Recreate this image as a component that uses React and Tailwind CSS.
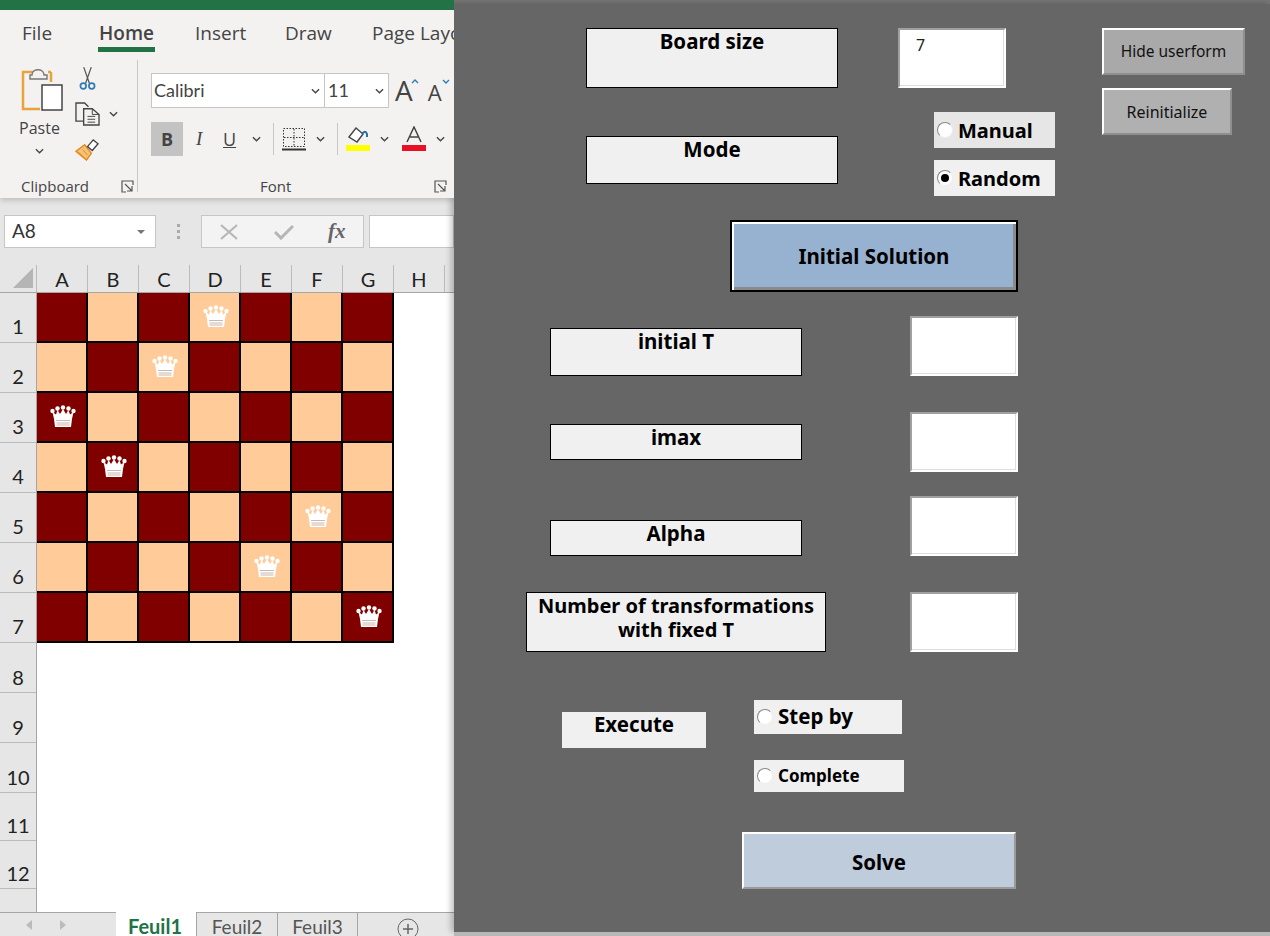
import React from 'react';

const uiFont = 'font-["Open_Sans","Noto_Sans",sans-serif]';
const sheetFont = 'font-["Lato","Liberation_Sans",sans-serif]';
const formFont = 'font-["Noto_Sans","Open_Sans",sans-serif]';

const columns = ['A', 'B', 'C', 'D', 'E', 'F', 'G', 'H', 'I'];
const queens = [3, 2, 0, 1, 5, 4, 6];
// the last two rows on the sheet are a little shorter than the others
const rowHeights = [50, 50, 50, 50, 50, 50, 50, 50, 50, 50, 48, 48];

const Chevron = ({ className = '' }) => (
    <svg viewBox="0 0 10 6" className={`w-[9px] h-[6px] shrink-0 ${className}`} fill="none" stroke="#444" strokeWidth="1.5">
        <path d="M1 1l4 4 4-4" />
    </svg>
);

const PasteIcon = () => (
    <svg viewBox="0 0 42 46" className="w-[42px] h-[46px]" fill="none">
        <path d="M14 6H2v37h17" stroke="#e8a33d" strokeWidth="2.5" />
        <path d="M30 6h-3M30 6v10" stroke="#e8a33d" strokeWidth="2.5" />
        <path d="M11 9c0-7 12-7 12 0h3v4H9V9z" fill="#f3f2f1" stroke="#777" strokeWidth="1.4" />
        <rect x="21" y="19" width="20" height="25" fill="#fff" stroke="#444" strokeWidth="1.5" />
    </svg>
);

const CutIcon = () => (
    <svg viewBox="0 0 18 26" className="w-[17px] h-[25px]" fill="none">
        <path d="M5 1l6 17M13 1L7 18" stroke="#555" strokeWidth="1.3" />
        <circle cx="4.5" cy="21" r="3" stroke="#2b7cb8" strokeWidth="1.8" />
        <circle cx="13.5" cy="21" r="3" stroke="#2b7cb8" strokeWidth="1.8" />
    </svg>
);

const CopyIcon = () => (
    <svg viewBox="0 0 26 25" className="w-[25px] h-[24px]" fill="none" stroke="#444" strokeWidth="1.4">
        <path d="M9 20H1V1h9l4 4" />
        <path d="M9 7h9l7 6v11H9z" fill="#f3f2f1" />
        <path d="M18 7v6h7M13 15h8M13 18h8M13 21h8" strokeWidth="1" />
    </svg>
);

const PainterIcon = () => (
    <svg viewBox="0 0 26 24" className="w-[25px] h-[23px]" fill="none">
        <path d="M1 14l9-7 7 9-5 7z" fill="#f6c27a" stroke="#e08b1f" strokeWidth="1.5" />
        <path d="M4 15l6 6M8 12l5 6" stroke="#e08b1f" />
        <path d="M13 9l6-7 5 4-6 7z" fill="#fff" stroke="#444" strokeWidth="1.4" />
    </svg>
);

const Launcher = () => (
    <svg viewBox="0 0 13 13" className="w-[13px] h-[13px]" fill="none" stroke="#555" strokeWidth="1.2">
        <path d="M12 5V1H1v11h4" />
        <path d="M4 4l7 7M11 6v5H6" />
    </svg>
);

const BorderIcon = () => (
    <svg viewBox="0 0 24 24" className="w-[24px] h-[24px]" fill="none" stroke="#333">
        <rect x="1.5" y="1.5" width="21" height="18" strokeDasharray="1.5 1.5" />
        <path d="M12 2v17M2 10.5h20" strokeDasharray="1.5 1.5" />
        <path d="M0 22.5h24" strokeWidth="2" />
    </svg>
);

const FillIcon = () => (
    <svg viewBox="0 0 24 26" className="w-[24px] h-[26px]" fill="none">
        <path d="M3 11L10 2l7 6-6 8z" fill="#fff" stroke="#444" strokeWidth="1.4" />
        <path d="M16 8c2-3 4-3 5 0v3" stroke="#2b6ca8" strokeWidth="2" />
        <rect y="19" width="24" height="6" fill="#ffff00" />
    </svg>
);

const FontColorIcon = () => (
    <svg viewBox="0 0 24 26" className="w-[24px] h-[26px]" fill="none">
        <path d="M5 16L12 1l7 15M8 11h8" stroke="#444" strokeWidth="1.5" />
        <rect y="19" width="24" height="6" fill="#e81123" />
    </svg>
);

const FontSizeCaret = ({ down = false, className = '' }) => (
    <svg viewBox="0 0 8 5" className={`w-[8px] h-[5px] shrink-0 ${className}`} fill="none" stroke="#2b7cb8" strokeWidth="1.4">
        <path d={down ? 'M1 1l3 3 3-3' : 'M1 4l3-3 3 3'} />
    </svg>
);

// white crown with the faint bands that the chess glyph has on the sheet
const Queen = () => (
    <svg viewBox="0 0 26 23" className="w-[26px] h-[23px]">
        <g fill="#fff">
            <circle cx="2.5" cy="6" r="2.2" />
            <circle cx="7.5" cy="3.5" r="2.2" />
            <circle cx="13" cy="2.5" r="2.2" />
            <circle cx="18.5" cy="3.5" r="2.2" />
            <circle cx="23.5" cy="6" r="2.2" />
            <path d="M2.5 7l3.500 2.500L7.500 5l2.500 4L13 4l3 5 2.500-4 1.500 4.500L23.500 7 22 14l-1 8H5l-1-8z" />
        </g>
        <path d="M6 15.500h14M6.500 18h13M6.500 20h13" stroke="#b39a90" strokeWidth="0.7" fill="none" />
    </svg>
);

const Ribbon = () => (
    <div className={`h-[198px] bg-[#f3f2f1] flex flex-col text-[#444] shadow-[0_2px_6px_rgba(0,0,0,0.2)] relative ${uiFont}`}>
        <div className="h-[10px] bg-[#217346]" />
        <div className="h-[44px] flex text-[19px] leading-[47px] whitespace-nowrap">
            <span className="ml-[22px] w-[30px] shrink-0">File</span>
            <span className="ml-[46px] w-[57px] h-[42px] shrink-0 font-semibold text-center border-b-[5px] border-[#217346]">Home</span>
            <span className="ml-[40px] w-[48px] shrink-0">Insert</span>
            <span className="ml-[42px] w-[45px] shrink-0">Draw</span>
            <span className="ml-[42px] shrink-0">Page Layout</span>
        </div>
        <div className="flex flex-1 pt-[6px]">
            <div className="w-[138px] h-[132px] border-r border-[#c8c6c4] flex shrink-0 relative">
                <div className="w-[75px] flex flex-col items-center pl-[9px] pt-[6px]">
                    <PasteIcon />
                    <span className="text-[16px] leading-[20px] mt-[6px] -ml-[5px]">Paste</span>
                    <Chevron className="mt-[10px] -ml-[5px]" />
                </div>
                <div className="flex flex-col items-start pt-[6px]">
                    <div className="ml-[4px] h-[36px]"><CutIcon /></div>
                    <div className="flex items-center h-[24px]"><CopyIcon /><Chevron className="ml-[9px]" /></div>
                    <div className="h-[26px] mt-[12px]"><PainterIcon /></div>
                </div>
                <div className="absolute left-[21px] bottom-[-4px] text-[15px] leading-[20px]">Clipboard</div>
                <div className="absolute left-[121px] bottom-[-1px]"><Launcher /></div>
            </div>
            <div className="flex-1 h-[132px] pl-[13px] relative">
                <div className="flex h-[35px] mt-[13px]">
                    <div className={`w-[174px] bg-white border border-[#c8c6c4] flex items-center justify-between pl-[2px] pr-[4px] text-[18px] ${sheetFont}`}>Calibri<Chevron /></div>
                    <div className={`w-[64px] bg-white border border-l-0 border-[#c8c6c4] flex items-center justify-between pl-[3px] pr-[4px] text-[18px] ${sheetFont}`}>11<Chevron /></div>
                    <span className="ml-[6px] text-[28px] leading-[34px]">A</span>
                    <FontSizeCaret className="mt-[6px] -ml-[2px]" />
                    <span className="ml-[9px] text-[22px] leading-[38px]">A</span>
                    <FontSizeCaret down className="mt-[6px]" />
                </div>
                <div className="flex items-center h-[34px] mt-[14px]">
                    <div className={`w-[32px] h-[34px] bg-[#c3c3c3] flex items-center justify-center font-bold text-[18px] ${uiFont}`}>B</div>
                    <span className="ml-[13px] w-[12px] text-[19px] italic font-['Liberation_Serif',serif]">I</span>
                    <span className="ml-[15px] w-[16px] text-[18px] underline">U</span>
                    <Chevron className="ml-[13px]" />
                    <div className="ml-[12px] w-px h-[32px] bg-[#c8c6c4]" />
                    <div className="ml-[8px]"><BorderIcon /></div>
                    <Chevron className="ml-[10px]" />
                    <div className="ml-[12px] w-px h-[32px] bg-[#c8c6c4]" />
                    <div className="ml-[8px]"><FillIcon /></div>
                    <Chevron className="ml-[10px]" />
                    <div className="ml-[13px]"><FontColorIcon /></div>
                    <Chevron className="ml-[10px]" />
                </div>
                <div className="absolute left-[122px] bottom-[-4px] text-[15px] leading-[20px]">Font</div>
                <div className="absolute left-[296px] bottom-[-1px]"><Launcher /></div>
            </div>
        </div>
    </div>
);

const FormulaBar = () => (
    <div className={`h-[67px] bg-[#e6e6e6] flex pt-[17px] pl-[4px] ${sheetFont}`}>
        <div className="w-[152px] h-[33px] bg-white border border-[#c8c6c4] flex items-center justify-between pl-[7px] pr-[10px] text-[19px] text-[#333]">
            A8
            <span className="border-x-[4px] border-x-transparent border-t-[4px] border-t-[#777]" />
        </div>
        <div className="w-[45px] flex flex-col items-center justify-center gap-[3px] h-[33px]">
            <span className="w-[3px] h-[3px] bg-[#aaa]" />
            <span className="w-[3px] h-[3px] bg-[#aaa]" />
            <span className="w-[3px] h-[3px] bg-[#aaa]" />
        </div>
        <div className="w-[163px] h-[33px] bg-[#f3f3f3] border border-[#c8c6c4] flex items-center pl-[18px]">
            <svg viewBox="0 0 18 16" className="w-[18px] h-[16px]" fill="none" stroke="#b5b5b5" strokeWidth="2"><path d="M1 1l16 14M17 1L1 15" /></svg>
            <svg viewBox="0 0 20 16" className="w-[20px] h-[16px] ml-[36px]" fill="none" stroke="#b5b5b5" strokeWidth="3"><path d="M1 8l6 6L19 2" /></svg>
            <span className="ml-[34px] text-[21px] italic font-bold text-[#666] font-['Liberation_Serif',serif]">fx</span>
        </div>
        <div className="flex-1 ml-[5px] h-[33px] bg-white border border-[#c8c6c4]" />
    </div>
);

const Cell = ({ row, col }) => {
    const dark = (row + col) % 2 === 0;
    return (
        <div className={`border-r-2 border-b-2 border-black flex justify-center pt-[12px] pl-[2px] ${dark ? 'bg-[#800000]' : 'bg-[#ffcc99]'}`}>
            {queens[row] === col && <Queen />}
        </div>
    );
};

const Sheet = () => (
    <div className={`flex-1 flex flex-col bg-white min-h-0 ${sheetFont}`}>
        <div className="h-[28px] flex bg-[#e6e6e6] border-b border-[#a6a6a6] shrink-0">
            <div className="w-[37px] relative border-r border-[#bbb] shrink-0">
                <div className="absolute right-[3px] bottom-[4px] border-l-[20px] border-l-transparent border-b-[20px] border-b-[#b5b5b5]" />
            </div>
            {columns.map((c) => (
                <div key={c} className="w-[51px] shrink-0 border-r border-[#bbb] text-center text-[20px] leading-[29px] text-[#222]">{c}</div>
            ))}
        </div>
        <div className="flex-1 flex min-h-0 overflow-hidden">
            <div className="w-[37px] shrink-0 bg-[#e6e6e6] border-r border-[#a6a6a6] flex flex-col">
                {rowHeights.map((h, i) => (
                    <div key={i} style={{ height: h }} className={`shrink-0 border-b border-[#bbb] flex items-end justify-center text-[20px] leading-[24px] text-[#222] ${i < 7 ? 'pb-[4px]' : 'pb-[3px]'}`}>{i + 1}</div>
                ))}
            </div>
            <div className="grid grid-cols-[repeat(7,51px)] grid-rows-[repeat(7,50px)] h-[350px]">
                {queens.map((_, row) => columns.slice(0, 7).map((c, col) => (
                    <Cell key={c + row} row={row} col={col} />
                )))}
            </div>
        </div>
    </div>
);

const Tabs = () => (
    <div className={`h-[24px] bg-[#e6e6e6] flex text-[19px] leading-[28px] text-[#555] shrink-0 ${sheetFont}`}>
        <div className="w-[116px] border-t border-[#a6a6a6] flex items-center pl-[26px] gap-[28px] shrink-0">
            <span className="border-y-[5px] border-y-transparent border-r-[6px] border-r-[#bbb]" />
            <span className="border-y-[5px] border-y-transparent border-l-[6px] border-l-[#bbb]" />
        </div>
        <div className="w-[81px] bg-white border-r border-[#a6a6a6] text-center text-[20px] pr-[2px] font-bold text-[#217346] shrink-0">Feuil1</div>
        <div className="w-[81px] border-t border-r border-[#a6a6a6] text-center shrink-0">Feuil2</div>
        <div className="w-[80px] border-t border-r border-[#a6a6a6] text-center shrink-0">Feuil3</div>
        <div className="flex-1 border-t border-[#a6a6a6] pl-[39px] pt-[5px]">
            <svg viewBox="0 0 22 22" className="w-[22px] h-[22px]" fill="none" stroke="#666"><circle cx="11" cy="11" r="10" /><path d="M11 6v10M6 11h10" strokeWidth="1.5" /></svg>
        </div>
    </div>
);

const Label = ({ className = '', size = 'text-[20.5px]', children }) => (
    <div className={`bg-[#f0f0f0] text-black font-bold leading-[24px] text-center ${size} ${className}`}>{children}</div>
);

const TextBox = ({ className = '', children }) => (
    <div className={`bg-white border-2 border-white border-t-[#a0a0a0] border-l-[#a0a0a0] shadow-[inset_-1px_-1px_0_#dddddd] text-[16px] leading-[24px] text-[#222] pl-[16px] pt-[3px] ${className}`}>{children}</div>
);

const Radio = ({ checked, className = '', textClass = 'text-[20px] mt-[2px]', children }) => (
    <div className={`flex items-center pl-[3px] text-black font-bold ${className}`}>
        <span className="w-[16px] h-[16px] rounded-full bg-white border border-[#888] border-b-[#eee] border-r-[#eee] flex items-center justify-center shrink-0">
            {checked && <span className="w-[8px] h-[8px] rounded-full bg-black" />}
        </span>
        <span className={`ml-[5px] ${textClass}`}>{children}</span>
    </div>
);

const GrayButton = ({ className = '', children }) => (
    <div className={`border-2 border-[#8f8f8f] border-t-white border-l-white text-[#111] text-center flex items-center justify-center ${className}`}>{children}</div>
);

const ParamRow = ({ className = '', labelClass = '', size, label }) => (
    <div className={`flex h-[60px] ml-[72px] ${className}`}>
        <div className="w-[300px] flex justify-center">
            <Label size={size} className={`border border-black ${labelClass}`}>{label}</Label>
        </div>
        <TextBox className="ml-[84px] w-[108px]" />
    </div>
);

const UserForm = () => (
    <div className="w-[816px] h-[936px] shrink-0 flex flex-col">
        <div className="h-[4px] bg-[#757575] shrink-0" />
        <div className={`h-[928px] bg-[#666666] shrink-0 shadow-[-3px_0_6px_rgba(0,0,0,0.25)] ${formFont}`}>
            <div className="flex pt-[24px]">
                <div className="ml-[132px] w-[252px] flex flex-col gap-[48px]">
                    <Label className="h-[60px] border border-black">Board size</Label>
                    <Label className="h-[48px] border border-black">Mode</Label>
                </div>
                <div className="ml-[60px] w-[157px] flex flex-col">
                    <TextBox className="w-[108px] h-[60px]">7</TextBox>
                    <Radio className="ml-[36px] mt-[24px] w-[121px] h-[36px] bg-[#e6e6e6]">Manual</Radio>
                    <Radio checked className="ml-[36px] mt-[12px] w-[121px] h-[36px] bg-[#f0f0f0]">Random</Radio>
                </div>
                <div className="ml-[47px] flex flex-col gap-[13px]">
                    <GrayButton className="w-[143px] h-[47px] pt-px bg-[#a9a9a9] text-[15.5px]">Hide userform</GrayButton>
                    <GrayButton className="w-[130px] h-[47px] bg-[#b0b0b0] text-[16px]">Reinitialize</GrayButton>
                </div>
            </div>

            <div className="ml-[276px] mt-[24px] w-[288px] h-[72px] pt-px bg-[#97b2d0] border-2 border-black shadow-[inset_2px_2px_0_#fff,inset_-3px_-3px_0_#8a8a8a] flex items-center justify-center font-bold text-[20.5px] text-black">
                Initial Solution
            </div>

            <ParamRow className="mt-[24px]" labelClass="w-[252px] h-[48px] mt-[12px]" label="initial T" />
            <ParamRow className="mt-[36px]" labelClass="w-[252px] h-[36px] mt-[12px]" label="imax" />
            <ParamRow className="mt-[24px]" labelClass="w-[252px] h-[36px] mt-[24px]" label="Alpha" />
            <ParamRow
                className="mt-[36px]"
                size="text-[20px]"
                labelClass="w-[300px] h-[60px] pt-px"
                label={<>Number of transformations<br />with fixed T</>}
            />

            <div className="flex mt-[48px] ml-[108px]">
                <Label className="w-[144px] h-[36px] mt-[12px]">Execute</Label>
                <div className="ml-[48px] flex flex-col">
                    <Radio className="w-[148px] h-[34px] bg-[#f0f0f0]" textClass="text-[20.5px] -mt-[2px]">Step by</Radio>
                    <Radio className="w-[150px] h-[32px] mt-[26px] bg-[#f0f0f0]" textClass="text-[17px]">Complete</Radio>
                </div>
            </div>

            <div className="ml-[288px] mt-[40px] w-[274px] h-[57px] pt-[4px] bg-[#bfccdb] border-2 border-[#9a9a9a] border-t-white border-l-white flex items-center justify-center font-bold text-[20.5px] text-black">
                Solve
            </div>
        </div>
        <div className="flex-1 bg-[#b8b8b8]" />
    </div>
);

const App = () => (
    <div className="w-[1270px] h-[936px] flex overflow-hidden">
        <div className="w-[454px] h-[936px] flex flex-col shrink-0 overflow-hidden">
            <Ribbon />
            <FormulaBar />
            <Sheet />
            <Tabs />
        </div>
        <UserForm />
    </div>
);

export default App;
